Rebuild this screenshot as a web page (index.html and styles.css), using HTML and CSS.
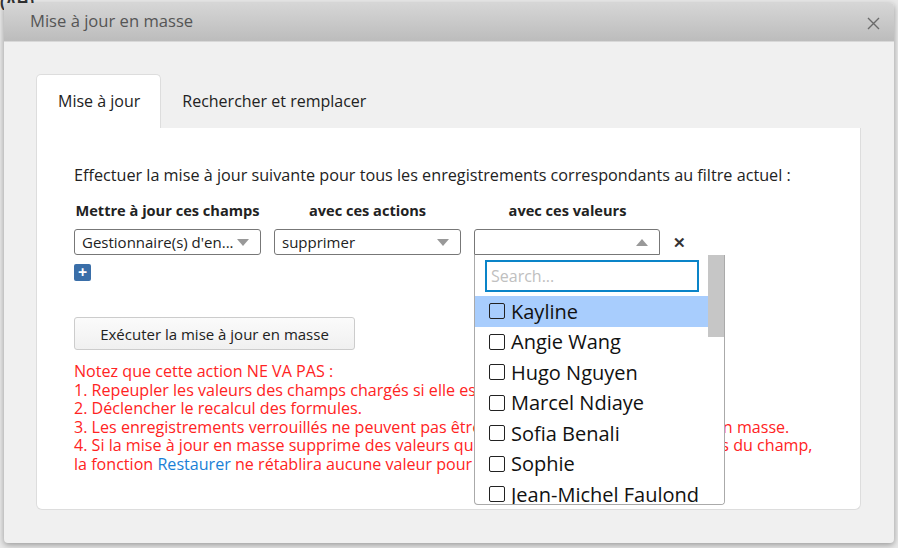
FILE: index.html
```html
<!DOCTYPE html>
<html lang="fr">
  <head>
    <meta charset="UTF-8" />
    <title>Mise à jour en masse</title>
    <link rel="stylesheet" href="styles.css">
  </head>
  <body>
    <div class="page-behind">(AH)</div>
    <div class="modal">
      <div class="modal-header">
        <span class="modal-title">Mise à jour en masse</span>
        <svg class="modal-close" width="13" height="13" viewBox="0 0 13 13">
          <path d="M1 1 L12 12 M12 1 L1 12" stroke="#6a6a6a" stroke-width="1.4" fill="none" />
        </svg>
      </div>
      <div class="modal-body">
        <div class="tabs">
          <div class="tab active">Mise à jour</div>
          <div class="tab">Rechercher et remplacer</div>
        </div>
        <div class="panel">
          <p class="intro">Effectuer la mise à jour suivante pour tous les enregistrements correspondants au filtre actuel :</p>

          <div class="row labels">
            <div class="col">Mettre à jour ces champs</div>
            <div class="col">avec ces actions</div>
            <div class="col">avec ces valeurs</div>
          </div>

          <div class="row">
            <div class="col">
              <div class="select"><span class="select-text">Gestionnaire(s) d'en...</span><span class="caret"></span></div>
            </div>
            <div class="col">
              <div class="select"><span class="select-text">supprimer</span><span class="caret"></span></div>
            </div>
            <div class="col value-col">
              <div class="select open"><span class="select-text"></span><span class="caret up"></span></div>
              <div class="dropdown">
                <div class="search-wrap">
                  <input class="search" type="text" placeholder="Search..." />
                </div>
                <ul class="options">
                  <li class="hl"><span class="box"></span>Kayline</li>
                  <li><span class="box"></span>Angie Wang</li>
                  <li><span class="box"></span>Hugo Nguyen</li>
                  <li><span class="box"></span>Marcel Ndiaye</li>
                  <li><span class="box"></span>Sofia Benali</li>
                  <li><span class="box"></span>Sophie</li>
                  <li><span class="box"></span>Jean-Michel Faulond</li>
                </ul>
                <div class="scrollbar"><div class="thumb"></div></div>
              </div>
            </div>
            <span class="remove">&#x2715;</span>
          </div>

          <div class="add-btn">+</div>

          <button class="run-btn">Exécuter la mise à jour en masse</button>

          <div class="notes">
            Notez que cette action NE VA PAS :<br>
            1. Repeupler les valeurs des champs chargés si elle est appliquée à un champ lié.<br>
            2. Déclencher le recalcul des formules.<br>
            3. Les enregistrements verrouillés ne peuvent pas être modifiés durant la mise à jour en masse.<br>
            4. Si la mise à jour en masse supprime des valeurs qui ne figurent pas parmi les options du champ,<br>
            la fonction <a href="#">Restaurer</a> ne rétablira aucune valeur pour ce champ.
          </div>
        </div>
      </div>
    </div>
  </body>
</html>
```

FILE: styles.css
```css
body {
  margin: 0;
  font-family: 'Open Sans', 'Noto Sans', Arial, sans-serif;
  background-color: #e9e9e9;
  color: #222;
  width: 898px;
  height: 548px;
  overflow: hidden;
  position: relative;
}
.page-behind {
  position: absolute;
  top: -9px;
  left: 0;
  font-size: 16px;
  font-weight: bold;
  color: #333;
}
.modal {
  position: absolute;
  top: 3px;
  left: 4px;
  width: 890px;
  height: 540px;
  background-color: #f0f0f0;
  border-radius: 4px;
  box-shadow: 0 2px 6px rgba(0, 0, 0, 0.35);
  overflow: hidden;
  display: flex;
  flex-direction: column;
}
.modal-header {
  height: 39px;
  flex-shrink: 0;
  background: linear-gradient(#d6d6d6, #bcbcbc);
  display: flex;
  align-items: center;
  justify-content: space-between;
  padding: 0 14px 0 26px;
  border-bottom: 1px solid #d8d8d8;
  box-sizing: border-box;
}
.modal-title {
  font-size: 16.6px;
  color: #555;
  margin-top: -4px;
}
.modal-close {
  margin-top: 3px;
}
.modal-body {
  padding: 32px 33px 33px 32px;
  flex: 1;
  display: flex;
  flex-direction: column;
}
.tabs {
  display: flex;
  height: 54px;
}
.tab {
  padding: 0 20px 0 21px;
  font-size: 16px;
  line-height: 54px;
  color: #222;
}
.tab.active {
  background-color: #fff;
  border: 1px solid #ddd;
  border-bottom: none;
  border-radius: 5px 5px 0 0;
  line-height: 53px;
}
.panel {
  flex: 1;
  background-color: #fff;
  border: 1px solid #ddd;
  border-top: none;
  border-radius: 0 0 6px 6px;
  padding: 35px 37px 0 37px;
  position: relative;
}
.intro {
  margin: 0 0 11px 0;
  font-size: 16.2px;
  line-height: 24px;
  white-space: nowrap;
}
.row {
  display: flex;
  align-items: center;
  gap: 13px;
}
.labels {
  font-size: 14.6px;
  font-weight: bold;
  height: 24px;
  margin-bottom: 7px;
}
.col {
  width: 187px;
  text-align: center;
  position: relative;
}
.value-col {
  width: 186px;
}
.select {
  height: 26px;
  border: 1px solid #777;
  border-radius: 3px;
  box-sizing: border-box;
  display: flex;
  align-items: center;
  justify-content: space-between;
  padding: 0 11px 0 7px;
  font-size: 15px;
  text-align: left;
  background-color: #fff;
}
.select.open {
  border-radius: 3px 3px 0 0;
}
.caret {
  width: 0;
  height: 0;
  border-left: 6px solid transparent;
  border-right: 6px solid transparent;
  border-top: 7px solid #999;
}
.caret.up {
  border-top: none;
  border-bottom: 7px solid #999;
}
.remove {
  font-size: 15px;
  color: #333;
  font-weight: bold;
}
.dropdown {
  position: absolute;
  top: 26px;
  left: 0;
  width: 251px;
  height: 250px;
  background-color: #fff;
  border: 1px solid #aaa;
  border-top: none;
  border-radius: 0 0 4px 4px;
  box-sizing: border-box;
  overflow: hidden;
  text-align: left;
  z-index: 5;
}
.search-wrap {
  padding: 5px 0 0 10px;
}
.search {
  width: 214px;
  height: 32px;
  box-sizing: border-box;
  border: 2px solid #0a84c8;
  font-family: inherit;
  font-size: 16px;
  padding: 0 4px;
  outline: none;
}
.search::placeholder {
  color: #c0c0c0;
}
.options {
  list-style: none;
  margin: 4px 0 0 0;
  padding: 0;
  width: 234px;
}
.options li {
  height: 30.5px;
  display: flex;
  align-items: center;
  padding-left: 14px;
  font-size: 20px;
  color: #111;
  white-space: nowrap;
}
.options li.hl {
  background-color: #a8cdfd;
}
.box {
  width: 16px;
  height: 16px;
  border: 1.5px solid #222;
  border-radius: 2px;
  box-sizing: border-box;
  margin-right: 6px;
  flex-shrink: 0;
}
.scrollbar {
  position: absolute;
  top: 0;
  right: 0;
  width: 16px;
  height: 100%;
  background-color: #fff;
}
.thumb {
  height: 82px;
  background-color: #c6c6c6;
}
.add-btn {
  width: 17px;
  height: 17px;
  margin-top: 9px;
  background-color: #3a6ea8;
  border-radius: 2px;
  color: #fff;
  font-size: 16px;
  font-weight: bold;
  line-height: 16px;
  text-align: center;
}
.run-btn {
  display: block;
  margin-top: 36px;
  width: 281px;
  height: 33px;
  background: linear-gradient(#fbfbfb, #f0f0f0);
  border: 1px solid #ccc;
  border-radius: 3px;
  font-family: inherit;
  font-size: 15px;
  color: #222;
}
.notes {
  margin-top: 12px;
  color: #ff2323;
  font-size: 16.1px;
  line-height: 18.6px;
  white-space: nowrap;
}
.notes a {
  color: #1a7fd6;
  text-decoration: none;
}
```
